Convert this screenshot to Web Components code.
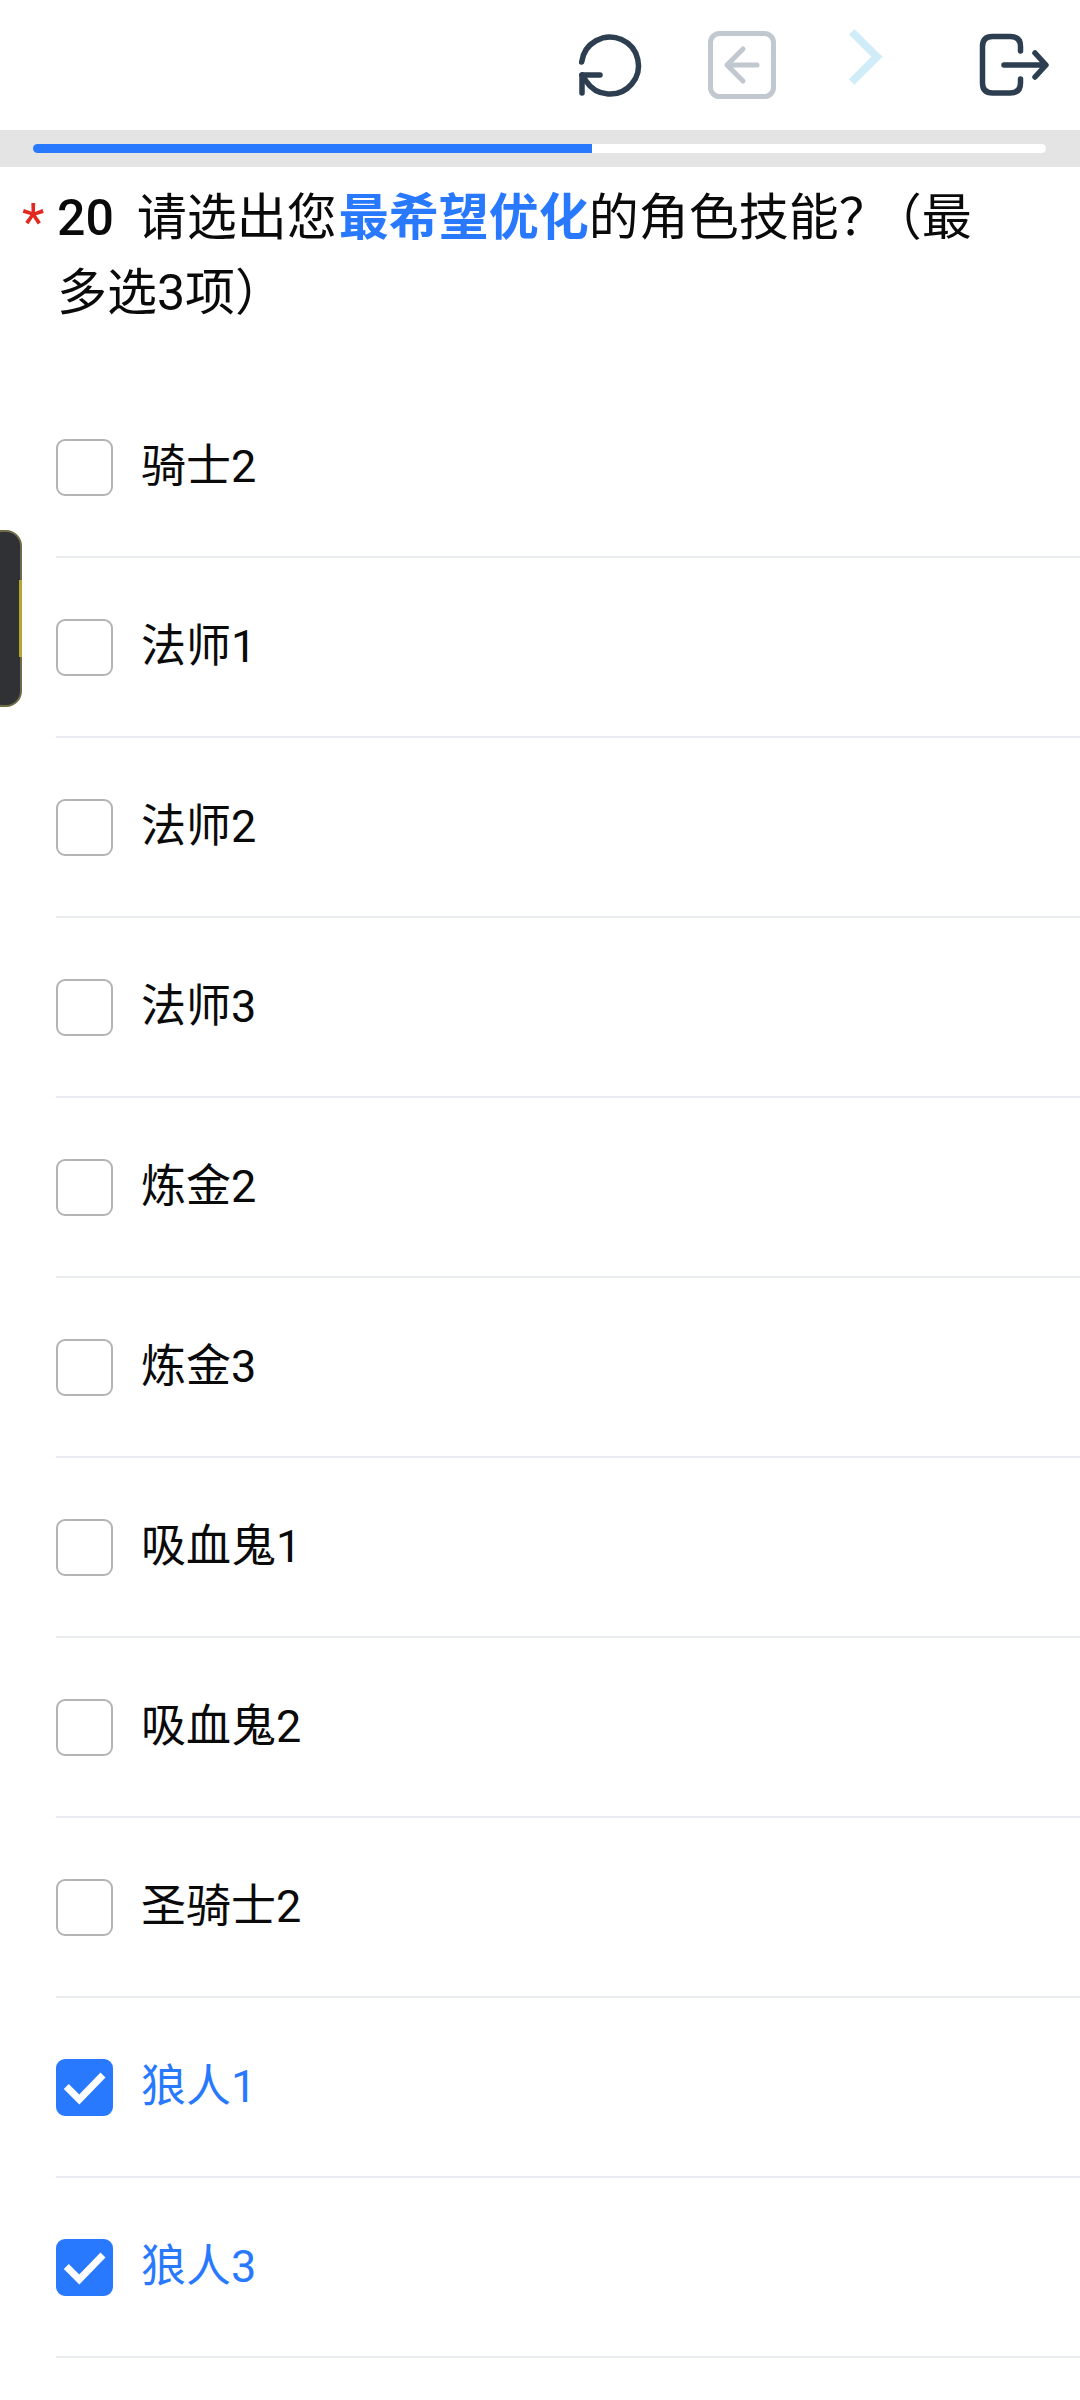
<!DOCTYPE html>
<html lang="zh">
<head>
<meta charset="utf-8">
<title>问卷</title>
<style>
  html, body { margin: 0; background: #fff; }
  body { width: 1080px; height: 2400px; overflow: hidden; position: relative;
    font-family: Roboto, "Noto Sans CJK SC", sans-serif; }
</style>
</head>
<body>
<survey-toolbar></survey-toolbar>
<survey-progress value="55.2"></survey-progress>
<survey-question number="20">请选出您<b>最希望优化</b><span>的角色技能</span><i>&#xFF1F;</i><span>&#xFF08;最</span><span>多选3项&#xFF09;</span></survey-question>
<option-list>
  <option-row>骑士2</option-row>
  <option-row>法师1</option-row>
  <option-row>法师2</option-row>
  <option-row>法师3</option-row>
  <option-row>炼金2</option-row>
  <option-row>炼金3</option-row>
  <option-row>吸血鬼1</option-row>
  <option-row>吸血鬼2</option-row>
  <option-row>圣骑士2</option-row>
  <option-row checked>狼人1</option-row>
  <option-row checked>狼人3</option-row>
</option-list>
<side-handle></side-handle>

<script>
const toolbarTemplate = document.createElement('template')
toolbarTemplate.innerHTML = `
  <style>
    :host { display: flex; justify-content: flex-end; height: 130px; padding-right: 25px; background: #fff; }
    svg { display: block; width: 80px; height: 130px; fill: none; stroke-linecap: round; stroke-linejoin: round; }
    .reload, .exit { stroke: #2c3e50; stroke-width: 5.5; }
    .back { stroke: #c2c8cf; stroke-width: 5; margin-left: 50px; }
    .next { stroke: #d0ecf8; stroke-width: 7.8; margin-left: 55px; stroke-linecap: butt; stroke-linejoin: miter; }
    .exit { margin-left: 60px; }
  </style>
  <svg class="reload" viewBox="0 0 80 130">
    <path d="M11.700 62 A28.500 28.500 0 1 1 16 81 L12 75"/>
    <path d="M30 75 H12 V93"/>
  </svg>
  <svg class="back" viewBox="0 0 80 130">
    <rect x="10.500" y="33.500" width="63" height="63" rx="9"/>
    <path d="M57 65 H27 M43 49 L27 65 L43 81"/>
  </svg>
  <svg class="next" viewBox="0 0 80 130">
    <path d="M16.700 31.700 L42 56.700 L16.700 82"/>
  </svg>
  <svg class="exit" viewBox="0 0 80 130">
    <path d="M45.500 51 V46.500 Q45.500 36.500 35.500 36.500 H17.500 Q7.500 36.500 7.500 46.500 V83 Q7.500 93 17.500 93 H35.500 Q45.500 93 45.500 83 V79"/>
    <path d="M29 65 H70 M60 53 L71 65 L60 77"/>
  </svg>
`
class SurveyToolbar extends HTMLElement {
  constructor() {
    super()
    this.attachShadow({mode: 'open'}).appendChild(toolbarTemplate.content.cloneNode(true))
  }
}
customElements.define('survey-toolbar', SurveyToolbar)

const progressTemplate = document.createElement('template')
progressTemplate.innerHTML = `
  <style>
    :host { display: block; height: 37px; padding: 14px 34px 14px 33px; box-sizing: border-box; background: #e4e4e4; }
    .track { height: 9px; border-radius: 5px; background: #fff; overflow: hidden; }
    .fill { height: 100%; background: #2979ff; }
  </style>
  <div class="track"><div class="fill"></div></div>
`
class SurveyProgress extends HTMLElement {
  constructor() {
    super()
    this.attachShadow({mode: 'open'}).appendChild(progressTemplate.content.cloneNode(true))
    this.shadowRoot.querySelector('.fill').style.width = this.getAttribute('value') + '%'
  }
}
customElements.define('survey-progress', SurveyProgress)

const questionTemplate = document.createElement('template')
questionTemplate.innerHTML = `
  <style>
    :host { display: flex; height: 211px; box-sizing: border-box; padding: 14px 80px 0 0; color: #0a0a0a;
      font: 50px/75px Roboto, "Noto Sans CJK SC", sans-serif; }
    .star { width: 57px; flex: none; padding-left: 22px; box-sizing: border-box; color: #e02a20; font-size: 52px; line-height: 84px; }
    .number { font-weight: 500; margin-right: 23px; }
    .text { flex: 1; }
    ::slotted(b) { color: #2979ff; font-weight: 700; margin-left: 2px; }
    ::slotted(i) { font-style: normal; letter-spacing: -17px; }
  </style>
  <span class="star">*</span>
  <div class="text"><span class="number"></span><slot></slot></div>
`
class SurveyQuestion extends HTMLElement {
  constructor() {
    super()
    this.attachShadow({mode: 'open'}).appendChild(questionTemplate.content.cloneNode(true))
    this.shadowRoot.querySelector('.number').textContent = this.getAttribute('number')
  }
}
customElements.define('survey-question', SurveyQuestion)

const listTemplate = document.createElement('template')
listTemplate.innerHTML = `
  <style>
    :host { display: flex; flex-direction: column; margin-left: 56px; }
  </style>
  <slot></slot>
`
class OptionList extends HTMLElement {
  constructor() {
    super()
    this.attachShadow({mode: 'open'}).appendChild(listTemplate.content.cloneNode(true))
  }
}
customElements.define('option-list', OptionList)

const rowTemplate = document.createElement('template')
rowTemplate.innerHTML = `
  <style>
    :host { display: flex; align-items: center; gap: 28px; height: 180px; box-sizing: border-box;
      border-bottom: 2px solid #e9edf1; color: #0a0a0a;
      font: 45px/60px Roboto, "Noto Sans CJK SC", sans-serif; }
    :host([checked]) { color: #2979ff; }
    .box { width: 57px; height: 57px; flex: none; box-sizing: border-box; border: 2.5px solid #b4b4b4; border-radius: 9px; background: #fff; }
    .box svg { display: none; width: 57px; height: 57px; margin: -2.5px; }
    :host([checked]) .box { border-color: #2979ff; background: #2979ff; }
    :host([checked]) .box svg { display: block; }
  </style>
  <span class="box">
    <svg viewBox="0 0 57 57"><path d="M10.300 28.500 L23.300 41.500 L47 17" fill="none" stroke="#fff" stroke-width="7"/></svg>
  </span>
  <slot></slot>
`
class OptionRow extends HTMLElement {
  constructor() {
    super()
    this.attachShadow({mode: 'open'}).appendChild(rowTemplate.content.cloneNode(true))
  }
}
customElements.define('option-row', OptionRow)

const handleTemplate = document.createElement('template')
handleTemplate.innerHTML = `
  <style>
    :host { position: absolute; left: -14px; top: 530px; width: 36px; height: 177px; box-sizing: border-box;
      border: 2px solid #6f6b48; border-radius: 16px; background: #2f3135; }
    .glow { position: absolute; right: -2px; top: 48px; width: 3px; height: 77px; background: #b5a532; }
  </style>
  <div class="glow"></div>
`
class SideHandle extends HTMLElement {
  constructor() {
    super()
    this.attachShadow({mode: 'open'}).appendChild(handleTemplate.content.cloneNode(true))
  }
}
customElements.define('side-handle', SideHandle)
</script>
</body>
</html>
